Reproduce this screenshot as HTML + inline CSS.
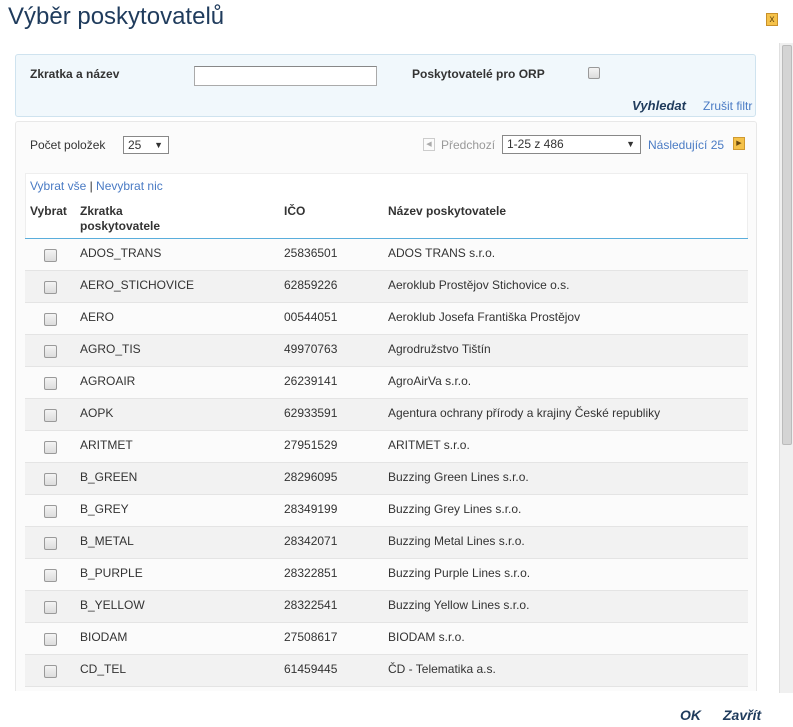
<!DOCTYPE html>
<html><head><meta charset="utf-8"><style>
body{margin:0;width:793px;height:727px;background:#fff;font-family:"Liberation Sans",Arial,sans-serif;position:relative;overflow:hidden;color:#333}
.a{position:absolute}
h1{position:absolute;left:8px;top:3px;margin:0;font-weight:normal;font-size:24px;color:#1f3b5c}
.close{left:766px;top:13px;width:12px;height:13px;background:#f5c24a;border:1px solid #c8902a;font-size:10px;line-height:11px;text-align:center;color:#6a4a10;box-sizing:border-box}
.filter{left:15px;top:54px;width:741px;height:63px;background:#f1f8fc;border:1px solid #cfe3ef;border-radius:3px;box-sizing:border-box}
.lbl{font-size:12px;font-weight:bold;color:#333}
.link{color:#4a7bc4;font-size:12px}
.panel{left:15px;top:121px;width:742px;height:580px;background:#fbfbfb;border:1px solid #e8e8e8;border-radius:3px;box-sizing:border-box}
.sel{border:1px solid #888;background:#fff;font-size:12px;box-sizing:border-box;height:18px;line-height:16px;padding-left:4px}
.row{position:absolute;left:25px;width:723px;height:32px;border-bottom:1px solid #e4e4e4;font-size:12px;box-sizing:border-box}
.row span{position:absolute;top:7px}
.cb{position:absolute;left:19px;top:10px;width:11px;height:11px;border:1px solid #9a9a9a;border-radius:2px;background:linear-gradient(#f4f4f4,#dcdcdc)}
.th{font-size:12px;color:#333;font-weight:bold}
</style></head><body>
<h1>Výběr poskytovatelů</h1>
<div class="a close">x</div>
<div class="a filter"></div>
<div class="a lbl" style="left:30px;top:67px">Zkratka a název</div>
<div class="a" style="left:194px;top:66px;width:183px;height:20px;border:1px solid #aaa;border-top-color:#888;background:#fff;box-sizing:border-box"></div>
<div class="a lbl" style="left:412px;top:67px">Poskytovatelé pro ORP</div>
<div class="a" style="left:588px;top:67px;width:10px;height:10px;border:1px solid #999;border-radius:2px;background:linear-gradient(#f4f4f4,#dcdcdc)"></div>
<div class="a" style="left:632px;top:98px;font-size:13px;font-weight:bold;font-style:italic;color:#1f3b5c">Vyhledat</div>
<div class="a link" style="left:703px;top:99px">Zrušit filtr</div>
<div class="a panel"></div>
<div class="a" style="left:30px;top:138px;font-size:12px">Počet položek</div>
<div class="a sel" style="left:123px;top:136px;width:46px">25<span style="position:absolute;right:5px;font-size:9px">▼</span></div>
<div class="a" style="left:423px;top:138px;width:10px;height:11px;border:1px solid #ccc;font-size:7px;color:#aaa;line-height:11px;text-align:center">◀</div>
<div class="a" style="left:441px;top:138px;font-size:12px;color:#999">Předchozí</div>
<div class="a sel" style="left:502px;top:135px;width:139px;height:19px">1-25 z 486<span style="position:absolute;right:5px;font-size:9px">▼</span></div>
<div class="a link" style="left:648px;top:138px">Následující 25</div>
<div class="a" style="left:733px;top:137px;width:12px;height:13px;background:#f5c24a;border:1px solid #d09a30;box-sizing:border-box;font-size:7px;color:#6a4a10;line-height:11px;text-align:center">▶</div>
<div class="a" style="left:25px;top:173px;width:723px;height:518px;border:1px solid #eee;border-bottom:none;box-sizing:border-box;background:#fff"></div>
<div class="a link" style="left:30px;top:179px">Vybrat vše <span style="color:#333">|</span> Nevybrat nic</div>
<div class="a th" style="left:30px;top:204px">Vybrat</div>
<div class="a th" style="left:80px;top:204px;line-height:15px">Zkratka<br>poskytovatele</div>
<div class="a th" style="left:284px;top:204px">IČO</div>
<div class="a th" style="left:388px;top:204px">Název poskytovatele</div>
<div class="a" style="left:25px;top:238px;width:723px;height:1px;background:#5aaedc"></div>
<div class="row" style="top:239px;background:#fbfbfb"><i class="cb"></i><span style="left:55px">ADOS_TRANS</span><span style="left:259px">25836501</span><span style="left:363px">ADOS TRANS s.r.o.</span></div>
<div class="row" style="top:271px;background:#f2f2f2"><i class="cb"></i><span style="left:55px">AERO_STICHOVICE</span><span style="left:259px">62859226</span><span style="left:363px">Aeroklub Prostějov Stichovice o.s.</span></div>
<div class="row" style="top:303px;background:#fbfbfb"><i class="cb"></i><span style="left:55px">AERO</span><span style="left:259px">00544051</span><span style="left:363px">Aeroklub Josefa Františka Prostějov</span></div>
<div class="row" style="top:335px;background:#f2f2f2"><i class="cb"></i><span style="left:55px">AGRO_TIS</span><span style="left:259px">49970763</span><span style="left:363px">Agrodružstvo Tištín</span></div>
<div class="row" style="top:367px;background:#fbfbfb"><i class="cb"></i><span style="left:55px">AGROAIR</span><span style="left:259px">26239141</span><span style="left:363px">AgroAirVa s.r.o.</span></div>
<div class="row" style="top:399px;background:#f2f2f2"><i class="cb"></i><span style="left:55px">AOPK</span><span style="left:259px">62933591</span><span style="left:363px">Agentura ochrany přírody a krajiny České republiky</span></div>
<div class="row" style="top:431px;background:#fbfbfb"><i class="cb"></i><span style="left:55px">ARITMET</span><span style="left:259px">27951529</span><span style="left:363px">ARITMET s.r.o.</span></div>
<div class="row" style="top:463px;background:#f2f2f2"><i class="cb"></i><span style="left:55px">B_GREEN</span><span style="left:259px">28296095</span><span style="left:363px">Buzzing Green Lines s.r.o.</span></div>
<div class="row" style="top:495px;background:#fbfbfb"><i class="cb"></i><span style="left:55px">B_GREY</span><span style="left:259px">28349199</span><span style="left:363px">Buzzing Grey Lines s.r.o.</span></div>
<div class="row" style="top:527px;background:#f2f2f2"><i class="cb"></i><span style="left:55px">B_METAL</span><span style="left:259px">28342071</span><span style="left:363px">Buzzing Metal Lines s.r.o.</span></div>
<div class="row" style="top:559px;background:#fbfbfb"><i class="cb"></i><span style="left:55px">B_PURPLE</span><span style="left:259px">28322851</span><span style="left:363px">Buzzing Purple Lines s.r.o.</span></div>
<div class="row" style="top:591px;background:#f2f2f2"><i class="cb"></i><span style="left:55px">B_YELLOW</span><span style="left:259px">28322541</span><span style="left:363px">Buzzing Yellow Lines s.r.o.</span></div>
<div class="row" style="top:623px;background:#fbfbfb"><i class="cb"></i><span style="left:55px">BIODAM</span><span style="left:259px">27508617</span><span style="left:363px">BIODAM s.r.o.</span></div>
<div class="row" style="top:655px;background:#f2f2f2"><i class="cb"></i><span style="left:55px">CD_TEL</span><span style="left:259px">61459445</span><span style="left:363px">ČD - Telematika a.s.</span></div>
<div class="row" style="top:687px;height:4px;background:#fbfbfb;border:none"></div>
<div class="a" style="left:0;top:691px;width:793px;height:36px;background:#fff"></div>
<div class="a" style="left:779px;top:43px;width:14px;height:650px;background:#f0f0f0;border-left:1px solid #e0e0e0"></div>
<div class="a" style="left:782px;top:45px;width:10px;height:400px;background:#d4d4d4;border:1px solid #bbb;box-sizing:border-box;border-radius:2px"></div>
<div class="a" style="left:680px;top:707px;font-size:14px;font-weight:bold;font-style:italic;color:#1f3b5c">OK</div>
<div class="a" style="left:723px;top:707px;font-size:14px;font-weight:bold;font-style:italic;color:#1f3b5c">Zavřít</div>
</body></html>
